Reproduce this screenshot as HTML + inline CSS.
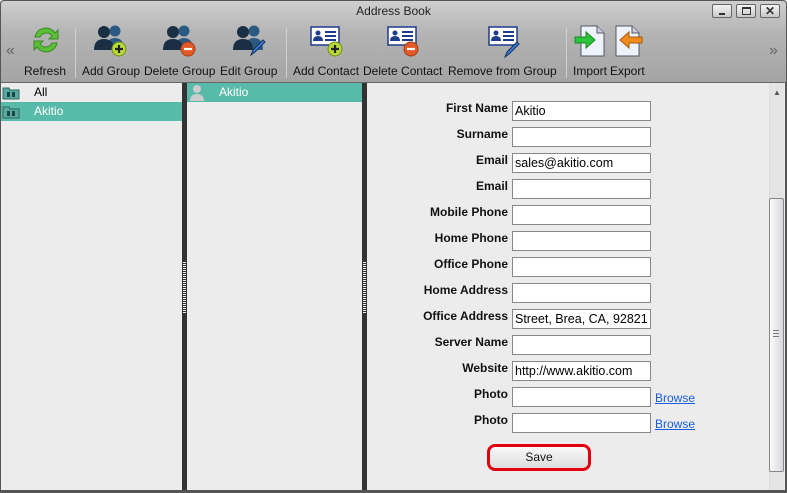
<!DOCTYPE html>
<html><head><meta charset="utf-8"><style>
*{margin:0;padding:0;box-sizing:border-box}
body{width:787px;height:493px;overflow:hidden;font-family:"Liberation Sans",Arial,sans-serif;background:#ececec;position:relative}
.tb{position:absolute;left:0;top:0;width:787px;height:83px;background:linear-gradient(#cfcfcf,#b4b4b4 40%,#a4a4a4);border:1px solid #555;border-bottom:1px solid #666;border-radius:4px 4px 0 0}
.title{position:absolute;top:4px;left:0;width:787px;text-align:center;font-size:12px;color:#222}
.lbl{position:absolute;top:64px;font-size:12px;color:#111;white-space:nowrap}
.sep{position:absolute;top:28px;width:1px;height:50px;background:#8a8a8a;border-right:1px solid #d0d0d0}
.ic{position:absolute}
.wb{position:absolute;top:4px;width:20px;height:14px;border:1px solid #666;border-radius:2px;background:linear-gradient(#f4f4f4,#c8c8c8)}
.pane{position:absolute;top:83px;height:408px;background:#ececec}
.div{position:absolute;top:83px;width:5px;height:408px;background:#333}
.div i{position:absolute;left:1px;top:178px;width:3px;height:52px;background:repeating-linear-gradient(#333 0 1px,#eee 1px 2px)}
.row{position:absolute;left:0;height:19px;font-size:12px;line-height:19px}
.fl{position:absolute;left:367px;width:141px;text-align:right;font-size:12px;font-weight:bold;color:#111}
.in{position:absolute;left:512px;width:139px;height:20px;background:#fff;border:1px solid #888;font-size:12.5px;line-height:18px;padding-left:2px;overflow:hidden;white-space:nowrap;color:#000}
.br{position:absolute;left:655px;font-size:12px;color:#1a5ee0;text-decoration:underline}
</style></head><body>
<div class="tb"></div>
<div class="title">Address Book</div>
<div class="wb" style="left:712px"><div style="position:absolute;left:6px;top:8px;width:6px;height:2px;background:#333"></div></div>
<div class="wb" style="left:736px"><div style="position:absolute;left:5px;top:2px;width:9px;height:8px;border:1px solid #333;border-top-width:2px"></div></div>
<div class="wb" style="left:760px;font-size:12px;font-weight:bold;text-align:center;line-height:12px;color:#333">✕</div>
<div style="position:absolute;left:6px;top:42px;font-size:16px;color:#666">«</div>
<div style="position:absolute;left:769px;top:42px;font-size:16px;color:#666">»</div>

<svg class="ic" style="left:30px;top:24px" width="32" height="32" viewBox="0 0 32 32"><path d="M5 13 A11 11 0 0 1 25 9 L28 6 L28 15 L19 15 L22 12 A7 7 0 0 0 10 13 Z" fill="#5bbf3a" stroke="#3a8a22"/><path d="M27 19 A11 11 0 0 1 7 23 L4 26 L4 17 L13 17 L10 20 A7 7 0 0 0 22 19 Z" fill="#5bbf3a" stroke="#3a8a22"/></svg>
<div class="lbl" style="left:24px">Refresh</div>
<div class="sep" style="left:75px"></div>

<svg class="ic" style="left:94px;top:24px" width="34" height="34" viewBox="0 0 34 34"><circle cx="21" cy="7" r="5.5" fill="#2a5a82"/><path d="M12 26 Q12 14 21 14 Q30 14 30 26 Z" fill="#2a5a82"/><circle cx="10" cy="8" r="6" fill="#1a2e44"/><path d="M0 26 Q0 15 10 15 Q20 15 20 26 Z" fill="#1a2e44"/><circle cx="25" cy="25" r="7" fill="#b8d83a" stroke="#6f8e18"/><path d="M21 25h8M25 21v8" stroke="#222" stroke-width="2.2"/></svg>
<div class="lbl" style="left:82px">Add Group</div>
<svg class="ic" style="left:163px;top:24px" width="34" height="34" viewBox="0 0 34 34"><circle cx="21" cy="7" r="5.5" fill="#2a5a82"/><path d="M12 26 Q12 14 21 14 Q30 14 30 26 Z" fill="#2a5a82"/><circle cx="10" cy="8" r="6" fill="#1a2e44"/><path d="M0 26 Q0 15 10 15 Q20 15 20 26 Z" fill="#1a2e44"/><circle cx="25" cy="25" r="7" fill="#e25a28" stroke="#a83a14"/><path d="M21 25h8" stroke="#fff" stroke-width="2.2"/></svg>
<div class="lbl" style="left:144px">Delete Group</div>
<svg class="ic" style="left:233px;top:24px" width="34" height="34" viewBox="0 0 34 34"><circle cx="21" cy="7" r="5.5" fill="#2a5a82"/><path d="M12 26 Q12 14 21 14 Q30 14 30 26 Z" fill="#2a5a82"/><circle cx="10" cy="8" r="6" fill="#1a2e44"/><path d="M0 26 Q0 15 10 15 Q20 15 20 26 Z" fill="#1a2e44"/><path d="M18 31 L20 26 L30 16 L32 18 L22 28 Z" fill="#3a7ad8" stroke="#16345a"/></svg>
<div class="lbl" style="left:220px">Edit Group</div>
<div class="sep" style="left:286px"></div>

<svg class="ic" style="left:310px;top:26px" width="36" height="32" viewBox="0 0 36 32"><rect x="1" y="1" width="28" height="18" fill="#fff" stroke="#1e3c8c" stroke-width="1.5"/><circle cx="8" cy="7" r="2.5" fill="#1e3c8c"/><path d="M3 15 Q3 10 8 10 Q13 10 13 15Z" fill="#1e3c8c"/><path d="M15 6h11M15 10h11M15 14h11" stroke="#1e3c8c" stroke-width="2"/><circle cx="25" cy="23" r="7" fill="#b8d83a" stroke="#6f8e18"/><path d="M21 23h8M25 19v8" stroke="#222" stroke-width="2.2"/></svg>
<div class="lbl" style="left:293px">Add Contact</div>
<svg class="ic" style="left:387px;top:26px" width="36" height="32" viewBox="0 0 36 32"><rect x="1" y="1" width="28" height="18" fill="#fff" stroke="#1e3c8c" stroke-width="1.5"/><circle cx="8" cy="7" r="2.5" fill="#1e3c8c"/><path d="M3 15 Q3 10 8 10 Q13 10 13 15Z" fill="#1e3c8c"/><path d="M15 6h11M15 10h11M15 14h11" stroke="#1e3c8c" stroke-width="2"/><circle cx="24" cy="23" r="7" fill="#e25a28" stroke="#a83a14"/><path d="M20 23h8" stroke="#fff" stroke-width="2.2"/></svg>
<div class="lbl" style="left:363px">Delete Contact</div>
<svg class="ic" style="left:488px;top:26px" width="36" height="32" viewBox="0 0 36 32"><rect x="1" y="1" width="28" height="18" fill="#fff" stroke="#1e3c8c" stroke-width="1.5"/><circle cx="8" cy="7" r="2.5" fill="#1e3c8c"/><path d="M3 15 Q3 10 8 10 Q13 10 13 15Z" fill="#1e3c8c"/><path d="M15 6h11M15 10h11M15 14h11" stroke="#1e3c8c" stroke-width="2"/><path d="M17 31 L19 26 L29 16 L31 18 L21 28 Z" fill="#3a7ad8" stroke="#16345a"/></svg>
<div class="lbl" style="left:448px">Remove from Group</div>
<div class="sep" style="left:566px"></div>

<svg class="ic" style="left:574px;top:24px" width="32" height="34" viewBox="0 0 32 34"><path d="M7 2H23L30 9V32H7Z" fill="#eef2fa" stroke="#556"/><path d="M23 2V9H30" fill="#ccd" stroke="#556"/><path d="M1 13H12V8L21 16L12 24V19H1Z" fill="#2cc43a" stroke="#168a20"/></svg>
<div class="lbl" style="left:573px">Import</div>
<svg class="ic" style="left:612px;top:24px" width="34" height="34" viewBox="0 0 34 34"><path d="M4 2H20L27 9V32H4Z" fill="#eef2fa" stroke="#556"/><path d="M20 2V9H27" fill="#ccd" stroke="#556"/><path d="M30 13H17V8L8 16L17 24V19H30Z" fill="#f08a1a" stroke="#a85a10"/></svg>
<div class="lbl" style="left:610px">Export</div>

<div class="pane" style="left:0;width:182px;border-left:1px solid #555"></div>
<div class="div" style="left:182px"><i></i></div>
<div class="pane" style="left:187px;width:175px"></div>
<div class="div" style="left:362px"><i></i></div>
<div class="pane" style="left:367px;width:420px;border-right:2px solid #555"></div>
<div style="position:absolute;left:0;top:490px;width:787px;height:3px;background:#555"></div>

<div class="row" style="top:83px;left:1px;width:181px;color:#000"><span style="position:absolute;left:33px">All</span></div>
<div class="row" style="top:102px;left:1px;width:181px;background:#58baa8;color:#fff"><span style="position:absolute;left:33px">Akitio</span></div>
<svg class="ic" style="left:2px;top:86px" width="18" height="14"><path d="M1 2h6l1 2h9v9H1z" fill="#5aa8a0" stroke="#2a6a64"/><rect x="5" y="6" width="3" height="5" fill="#1a4844"/><rect x="10" y="6" width="3" height="5" fill="#1a4844"/></svg>
<svg class="ic" style="left:2px;top:105px" width="18" height="14"><path d="M1 2h6l1 2h9v9H1z" fill="#5aa8a0" stroke="#2a6a64"/><rect x="5" y="6" width="3" height="5" fill="#1a4844"/><rect x="10" y="6" width="3" height="5" fill="#1a4844"/></svg>
<div class="row" style="top:83px;left:187px;width:175px;background:#58baa8;color:#fff"><span style="position:absolute;left:32px">Akitio</span>
<svg style="position:absolute;left:2px;top:1px" width="16" height="17"><circle cx="8" cy="5" r="4" fill="#ccc"/><path d="M1 17Q1 10 8 10Q15 10 15 17Z" fill="#ccc"/></svg></div>

<div style="position:absolute;left:769px;top:83px;width:15px;height:407px;background:#e4e4e4;border-left:1px solid #ddd"></div>
<div style="position:absolute;left:773px;top:88px;font-size:8px;color:#555">▲</div>
<div style="position:absolute;left:769px;top:198px;width:15px;height:274px;background:linear-gradient(90deg,#fafafa,#d8d8e0);border:1px solid #888;border-radius:2px"></div>
<div style="position:absolute;left:773px;top:330px;width:6px;height:7px;background:repeating-linear-gradient(#777 0 1px,transparent 1px 3px)"></div>

<div class="fl" style="top:101px">First Name</div><div class="in" style="top:101px">Akitio</div>
<div class="fl" style="top:127px">Surname</div><div class="in" style="top:127px"></div>
<div class="fl" style="top:153px">Email</div><div class="in" style="top:153px">sales@akitio.com</div>
<div class="fl" style="top:179px">Email</div><div class="in" style="top:179px"></div>
<div class="fl" style="top:205px">Mobile Phone</div><div class="in" style="top:205px"></div>
<div class="fl" style="top:231px">Home Phone</div><div class="in" style="top:231px"></div>
<div class="fl" style="top:257px">Office Phone</div><div class="in" style="top:257px"></div>
<div class="fl" style="top:283px">Home Address</div><div class="in" style="top:283px"></div>
<div class="fl" style="top:309px">Office Address</div><div class="in" style="top:309px">Street, Brea, CA, 92821</div>
<div class="fl" style="top:335px">Server Name</div><div class="in" style="top:335px"></div>
<div class="fl" style="top:361px">Website</div><div class="in" style="top:361px">http://www.akitio.com</div>
<div class="fl" style="top:387px">Photo</div><div class="in" style="top:387px"></div><div class="br" style="top:391px">Browse</div>
<div class="fl" style="top:413px">Photo</div><div class="in" style="top:413px"></div><div class="br" style="top:417px">Browse</div>
<div style="position:absolute;left:487px;top:444px;width:104px;height:27px;border:3px solid #e00010;border-radius:8px;background:linear-gradient(#fafafa,#dcdcdc);font-size:12px;text-align:center;line-height:21px;color:#111">Save</div>
</body></html>
